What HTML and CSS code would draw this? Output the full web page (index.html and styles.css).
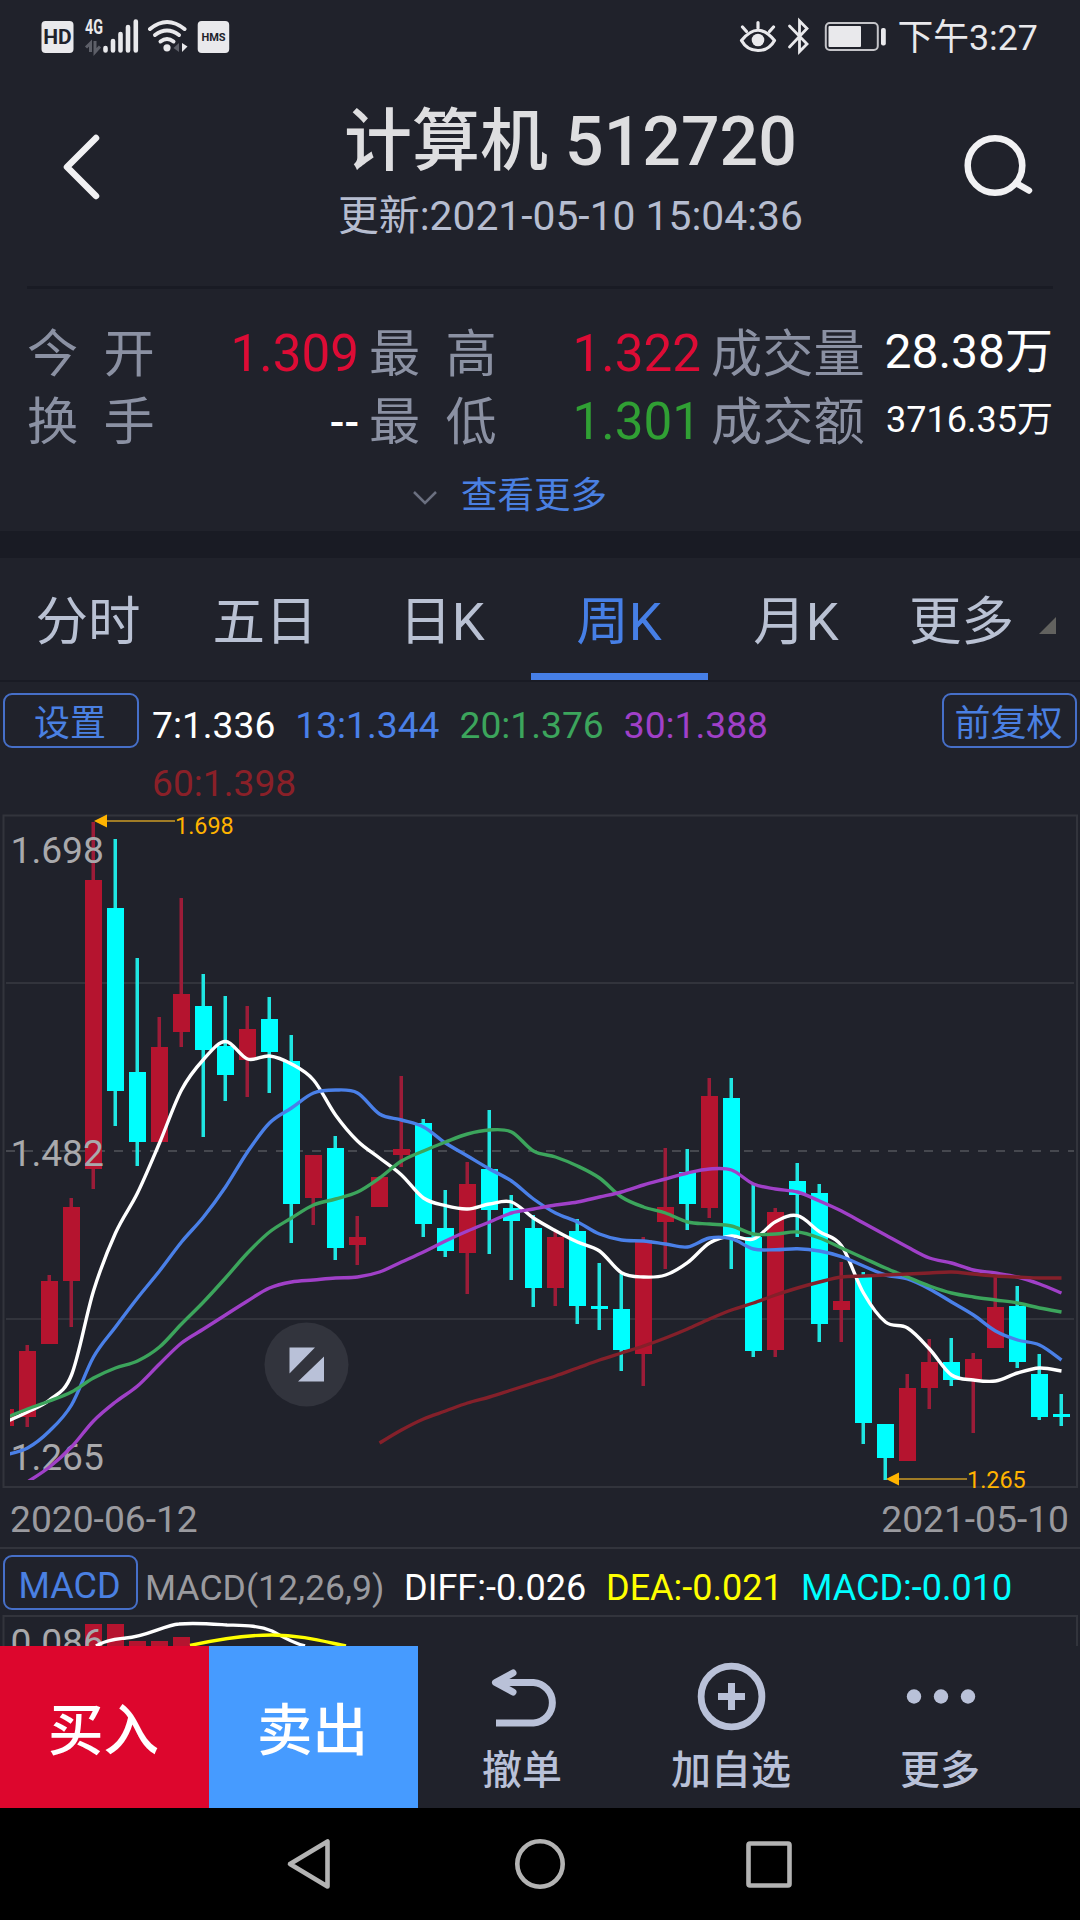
FILE: index.html
```html
<!DOCTYPE html>
<html lang="zh-CN">
<head>
    <meta charset="UTF-8">
    <meta name="viewport" content="width=device-width, initial-scale=1.0">
    <title>计算机 512720</title>
    <link rel="stylesheet" href="styles.css">
</head>
<body>
    <!-- Status Bar -->
    <div class="status-bar">
        <svg class="status-left" width="200" height="40" viewBox="36 16 200 40">
            <rect x="41.5" y="21" width="32" height="32" rx="4" fill="#e9e9ec"/>
            <text x="57.5" y="44" class="hd-text">HD</text>
            <text x="94" y="34" class="net-text" textLength="18" lengthAdjust="spacingAndGlyphs">4G</text>
            <path d="M90.500 52V43L86 47.500M95 41V52L100 46.500" fill="none" stroke="#5d5f68" stroke-width="3"/>
            <path d="M105.500 48V50.500M113 41V50.500M120.500 34V50.500M128 27V50.500M135.800 21.500V50.500" stroke="#e9e9ec" stroke-width="4.600" stroke-linecap="round"/>
            <g fill="none" stroke="#e9e9ec" stroke-width="4" stroke-linecap="round">
                <path d="M150 29Q167 15 184.500 29"/>
                <path d="M155 35Q167 26 179 35"/>
                <path d="M160.500 41.500Q167 36.500 173.500 41.500"/>
            </g>
            <circle cx="167" cy="47.800" r="3.600" fill="#e9e9ec"/>
            <path d="M179 43V52L173.500 48Z" fill="#5d5f68"/>
            <path d="M182 43V52L187.500 46.500Z" fill="#e9e9ec"/>
            <rect x="197.700" y="21" width="31.500" height="32" rx="4" fill="#e9e9ec"/>
            <text x="213.500" y="40.500" class="hms-text">HMS</text>
        </svg>
        <div class="status-right">
            <svg width="150" height="40" viewBox="740 16 150 40">
                <g fill="none" stroke="#e9e9ec" stroke-width="3.200" stroke-linecap="round">
                    <path d="M742.500 40.500Q759 20 775.500 40.500Q770 50.500 759 50.500Q748 50.500 742.500 40.500Z" stroke-linejoin="round"/>
                    <path d="M759 28V22.500M747.500 31.500L743.500 27M770.500 31.500L774.500 27"/>
                </g>
                <circle cx="759" cy="40" r="6.300" fill="#e9e9ec"/>
                <path d="M790.500 26L808 44L800.500 51.500V21L808 28.500L790.500 47" fill="none" stroke="#e9e9ec" stroke-width="2.800" stroke-linecap="round"/>
                <rect x="826.800" y="23" width="52" height="27" rx="4" fill="none" stroke="#c4c4c8" stroke-width="2"/>
                <rect x="829.500" y="26" width="32.500" height="21" rx="1" fill="#e9e9ec"/>
                <rect x="882" y="28" width="4.800" height="17.500" rx="2" fill="#e9e9ec"/>
            </svg>
            <span class="clock">下午3:27</span>
        </div>
    </div>

    <!-- Title -->
    <div class="header">
        <svg class="icon-back" width="60" height="80" viewBox="0 0 60 80"><path d="M38 11L9 40L38 69" fill="none" stroke="#f1f1f3" stroke-width="6.500" stroke-linecap="round" stroke-linejoin="round"/></svg>
        <div class="title">
            <h1>计算机 512720</h1>
            <p>更新:2021-05-10 15:04:36</p>
        </div>
        <svg class="icon-search" width="80" height="80" viewBox="0 0 80 80" fill="none" stroke="#f1f1f3">
            <circle cx="35" cy="38.500" r="27.300" stroke-width="6.500"/>
            <path d="M56 56L69 63.500" stroke-width="6.500" stroke-linecap="round"/>
        </svg>
    </div>

    <!-- Quote figures -->
    <div class="quotes">
        <div class="quote-col col-open">
            <div class="quote"><span class="label">今  开</span><span class="value up">1.309</span></div>
            <div class="quote"><span class="label">换  手</span><span class="value dashes">--</span></div>
        </div>
        <div class="quote-col col-range">
            <div class="quote"><span class="label">最  高</span><span class="value up">1.322</span></div>
            <div class="quote"><span class="label">最  低</span><span class="value down">1.301</span></div>
        </div>
        <div class="quote-col col-volume">
            <div class="quote"><span class="label">成交量</span><span class="value volume">28.38万</span></div>
            <div class="quote"><span class="label">成交额</span><span class="value amount">3716.35万</span></div>
        </div>
    </div>
    <div class="show-more">
        <svg width="26" height="16" viewBox="0 0 26 16"><path d="M2 2L13 13L24 2" fill="none" stroke="#6b7080" stroke-width="2.500"/></svg>
        <span>查看更多</span>
    </div>

    <!-- Period tabs -->
    <div class="tabs">
        <a class="tab">分时</a>
        <a class="tab">五日</a>
        <a class="tab">日K</a>
        <a class="tab active">周K</a>
        <a class="tab">月K</a>
        <a class="tab tab-more">更多</a>
    </div>

    <!-- Moving averages -->
    <div class="ma-bar">
        <button class="outline-btn settings-btn">设置</button>
        <div class="ma-list">
            <span class="ma7">7:1.336</span>
            <span class="ma13">13:1.344</span>
            <span class="ma20">20:1.376</span>
            <span class="ma30">30:1.388</span>
            <span class="ma60">60:1.398</span>
        </div>
        <button class="outline-btn adjust-btn">前复权</button>
    </div>

    <!-- Weekly K line chart -->
    <svg class="k-chart" width="1080" height="682" viewBox="0 808 1080 682">
        <defs>
            <clipPath id="plotArea"><rect x="10" y="810" width="1064" height="670"/></clipPath>
        </defs>
        <path class="grid" d="M3.500 815.500H1077V1487H3.500ZM6 983H1074M6 1319H1074"/>
        <path class="grid-dash" d="M6 1151H1074"/>
        <g id="candles" clip-path="url(#plotArea)"></g>
        <g class="axis-text">
            <text x="10.500" y="863">1.698</text>
            <text x="10.500" y="1166">1.482</text>
            <text x="10.500" y="1470">1.265</text>
        </g>
        <g id="averages" clip-path="url(#plotArea)"></g>
        <g class="marks">
            <path d="M106 821H175M898 1479H967"/>
            <polygon points="94,821 107,814.500 107,827.500"/>
            <polygon points="886,1479 899,1472.500 899,1485.500"/>
            <text x="175" y="834">1.698</text>
            <text x="967" y="1488">1.265</text>
        </g>
        <circle cx="306.500" cy="1364.500" r="42" fill="#32343d"/>
        <path d="M289.500 1347.500H315L289.500 1373.500ZM324 1356.500V1381.500H298Z" fill="#b9c1d8"/>
    </svg>
    <div class="dates">
        <span>2020-06-12</span>
        <span>2021-05-10</span>
    </div>

    <!-- MACD -->
    <div class="macd-bar">
        <button class="outline-btn macd-btn">MACD</button>
        <span class="macd-name">MACD(12,26,9)</span>
        <span class="diff">DIFF:-0.026</span>
        <span class="dea">DEA:-0.021</span>
        <span class="macd">MACD:-0.010</span>
    </div>
    <svg class="macd-chart" width="1080" height="31" viewBox="0 1615 1080 31">
        <path class="grid" d="M3.500 1650V1616H1077V1650"/>
        <path d="M85 1624H102V1650H85ZM107 1624H124V1650H107ZM129 1641H146V1650H129ZM151 1641H168V1650H151ZM173 1637H190V1650H173Z" fill="#b5142f"/>
        <g class="axis-text"><text x="10.500" y="1655">0.086</text></g>
        <path class="line" stroke="#fff" d="M96 1646C108 1639 118 1639 126 1638C145 1637 165 1625 179 1624C195 1622.500 212 1624 227 1625C242 1625.500 258 1625 272 1631C282 1636 290 1642 305 1646"/>
        <path class="line" stroke="#ff0" d="M190 1645.500C215 1640 245 1635 272 1635C300 1635 322 1641 346 1646"/>
    </svg>

    <!-- Trade actions -->
    <div class="actions">
        <a class="action buy">买入</a>
        <a class="action sell">卖出</a>
        <a class="action">
            <svg width="80" height="80" viewBox="0 0 80 80" fill="none" stroke="#b9c1d8" stroke-width="7">
                <path d="M30 27L12.500 36.500L30 46" stroke-linecap="round" stroke-linejoin="round"/>
                <path d="M14 36.500H50.500A20.300 20.300 0 0 1 50.500 77H13"/>
            </svg>
            <span>撤单</span>
        </a>
        <a class="action">
            <svg width="80" height="80" viewBox="0 0 80 80" fill="none" stroke="#b9c1d8">
                <circle cx="39.500" cy="50.500" r="30.400" stroke-width="6.800"/>
                <path d="M39.500 37V64M26 50.500H53" stroke-width="7"/>
            </svg>
            <span>加自选</span>
        </a>
        <a class="action">
            <svg width="80" height="80" viewBox="0 0 80 80" fill="#b9c1d8">
                <circle cx="13" cy="50.500" r="7.200"/>
                <circle cx="40" cy="50.500" r="7.200"/>
                <circle cx="67" cy="50.500" r="7.200"/>
            </svg>
            <span>更多</span>
        </a>
    </div>

    <!-- System navigation -->
    <div class="system-nav">
        <svg width="540" height="60" viewBox="270 1834 540 60" fill="none" stroke="#b3b3b3" stroke-width="4.600" stroke-linejoin="round">
            <path d="M290 1864L327.500 1841.500V1886.500Z"/>
            <circle cx="540" cy="1864" r="22.700"/>
            <rect x="748.500" y="1843.500" width="41" height="42" rx="1.500"/>
        </svg>
    </div>

    <script src="chart.js"></script>
</body>
</html>
```
FILE: styles.css
```css
/* General Reset */
* {
    margin: 0;
    padding: 0;
    box-sizing: border-box;
}

body {
    width: 1080px;
    height: 1920px;
    overflow: hidden;
    display: flex;
    flex-direction: column;
    background-color: #20222b;
    color: #fff;
    font-family: Roboto, "Noto Sans CJK SC", sans-serif;
}

svg {
    display: block;
    flex-shrink: 0;
}

/* Status Bar */
.status-bar {
    height: 74px;
    padding: 16px 42px 0 36px;
    display: flex;
    justify-content: space-between;
    align-items: flex-start;
}

.status-right {
    display: flex;
    gap: 8px;
}

.clock {
    font-size: 35.8px;
    line-height: 45px;
    color: #e9e9ec;
}

.hd-text {
    font-size: 21px;
    font-weight: 700;
    text-anchor: middle;
    fill: #20222b;
}

.net-text {
    font-size: 20px;
    font-weight: 700;
    text-anchor: middle;
    fill: #e9e9ec;
}

.hms-text {
    font-size: 11px;
    font-weight: 700;
    text-anchor: middle;
    fill: #20222b;
}

/* Header */
.header {
    height: 215px;
    margin: 0 27px;
    padding: 0 13px 0 31px;
    display: flex;
    border-bottom: 3px solid #191b24;
}

.icon-back,
.icon-search {
    margin-top: 53px;
}

.title {
    flex: 1;
    padding: 23px 0 0 63px;
    text-align: center;
}

.title h1 {
    font-size: 68px;
    line-height: 90px;
    font-weight: 500;
    color: #dedee0;
}

.title p {
    margin-top: 3px;
    font-size: 40.8px;
    line-height: 52px;
    color: #b6bdd0;
}

/* Quotes */
.quotes {
    height: 171px;
    padding: 31px 27px 0;
    display: flex;
}

.col-open {
    width: 332px;
    margin-right: 10px;
}

.col-range {
    width: 332px;
    margin-right: 10px;
}

.col-volume {
    width: 342px;
}

.quote {
    height: 68px;
    display: flex;
    justify-content: space-between;
    font-size: 51.2px;
    line-height: 69px;
    white-space: pre;
}

.label {
    color: #8b91a3;
}

.up {
    color: #dd0c35;
}

.down {
    color: #30a034;
}

.value.up,
.value.down {
    line-height: 68px;
}

.dashes {
    font-weight: 500;
    font-size: 43px;
}

.volume {
    font-size: 48px;
    line-height: 63px;
}

.amount {
    font-size: 36px;
    line-height: 64px;
}

.show-more {
    height: 71px;
    padding: 15px 0 0 412px;
    display: flex;
    gap: 23px;
    font-size: 36.5px;
    line-height: 41px;
    color: #4a80e2;
}

.show-more svg {
    margin-top: 15px;
}

/* Tabs */
.tabs {
    height: 151px;
    display: flex;
    border-top: 27px solid #191b24;
    border-bottom: 2px solid #191b24;
}

.tab {
    width: 177px;
    padding-right: 1px;
    border-bottom: 7px solid transparent;
    font-size: 52.5px;
    line-height: 129px;
    text-align: center;
    color: #b9c1d3;
}

.tab.active {
    color: #467fe6;
    border-bottom-color: #467fe6;
}

.tab-more {
    display: flex;
    gap: 25px;
    width: 195px;
    padding-left: 24px;
}

.tab-more::after {
    content: "";
    align-self: center;
    margin-top: 20px;
    border-left: 17px solid transparent;
    border-bottom: 17px solid #62625f;
}

/* Moving averages */
.ma-bar {
    height: 126px;
    padding: 11px 3px 0;
    display: flex;
    align-items: flex-start;
}

.outline-btn {
    flex-shrink: 0;
    height: 55px;
    padding: 4px 2px 0 0;
    border: 2px solid #466fc8;
    border-radius: 9px;
    background: none;
    color: #4a80e2;
    font-family: inherit;
    font-size: 36px;
    line-height: 50px;
}

.settings-btn {
    width: 136px;
}

.adjust-btn {
    width: 135px;
}

.ma-list {
    flex: 1;
    padding: 3px 118px 0 13px;
    display: flex;
    flex-wrap: wrap;
    column-gap: 20px;
    font-size: 37.2px;
    line-height: 58px;
}

.ma13 {
    color: #4a80e8;
}

.ma20 {
    color: #3ca55c;
}

.ma30 {
    color: #a040c8;
}

.ma60 {
    color: #8a2028;
}

/* Charts */
.k-chart {
    overflow: visible;
}

.grid {
    fill: none;
    stroke: #32343c;
    stroke-width: 2;
}

.grid-dash {
    stroke: #46484f;
    stroke-width: 2;
    stroke-dasharray: 9 9;
}

.line {
    fill: none;
    stroke-width: 3.4;
}

.axis-text {
    font-size: 37.2px;
    fill: #a9a9ac;
}

.marks {
    font-size: 23.4px;
    fill: #ffb300;
}

.marks path {
    stroke: #a07c26;
    stroke-width: 2;
}

.dates {
    height: 59px;
    padding: 0 11px 0 10px;
    display: flex;
    justify-content: space-between;
    font-size: 37.2px;
    line-height: 58px;
    color: #9a9a9f;
    border-bottom: 2px solid #32343c;
}

/* MACD */
.macd-bar {
    height: 66px;
    padding: 6px 3px 0;
    display: flex;
    font-size: 36px;
    line-height: 66px;
}

.macd-btn {
    width: 135px;
    margin-right: 6px;
}

.macd-name {
    color: #9a9a9f;
    width: 260px;
    padding-left: 1px;
    font-size: 35.6px;
}

.diff {
    width: 202px;
}

.dea {
    width: 195px;
    color: #ff0;
}

.macd {
    color: #0ff;
}

/* Actions */
.actions {
    height: 162px;
    display: flex;
}

.action {
    width: 209px;
    display: flex;
    flex-direction: column;
    align-items: center;
    font-size: 40px;
    line-height: 50px;
    font-weight: 500;
    color: #b9c1d8;
}

.action svg {
    overflow: visible;
}

.action span {
    margin-top: 20px;
    padding-right: 1px;
}

.buy,
.sell {
    justify-content: center;
    padding: 9px 2px 0 0;
    font-size: 55.5px;
    color: #fff;
}

.buy {
    background-color: #dd062d;
}

.sell {
    background-color: #469bff;
}

/* System navigation */
.system-nav {
    height: 112px;
    padding: 26px 270px 0;
    background-color: #000;
}
```
FILE: chart.js
```js
const STEP = 22;
const FIRST_X = 5.5;
const UP = '#b5142f';
const DOWN = '#00ffff';

// [high, body top, body bottom, low, rising]
const candles = [
    [1409, 1409, 1426, 1426, 1], [1345, 1351, 1417, 1427, 1], [1275, 1281, 1344, 1344, 1],
    [1198, 1207, 1281, 1327, 1], [822, 880, 1169, 1189, 1], [839, 908, 1091, 1126, 0],
    [958, 1072, 1142, 1166, 0], [1017, 1047, 1142, 1142, 1], [898, 994, 1032, 1047, 1],
    [974, 1006, 1050, 1137, 0], [996, 1046, 1075, 1101, 0], [1006, 1029, 1060, 1097, 1],
    [997, 1019, 1052, 1093, 0], [1035, 1061, 1204, 1243, 0], [1155, 1155, 1198, 1225, 1],
    [1136, 1148, 1248, 1260, 0], [1216, 1237, 1245, 1265, 1], [1177, 1177, 1207, 1207, 1],
    [1076, 1149, 1155, 1167, 1], [1119, 1123, 1224, 1237, 0], [1190, 1228, 1251, 1257, 0],
    [1162, 1184, 1253, 1294, 1], [1110, 1169, 1210, 1254, 0], [1195, 1208, 1221, 1280, 0],
    [1215, 1228, 1288, 1307, 0], [1230, 1237, 1288, 1306, 1], [1219, 1231, 1306, 1324, 0],
    [1263, 1306, 1309, 1330, 0], [1274, 1309, 1350, 1371, 0], [1237, 1240, 1354, 1386, 1],
    [1148, 1207, 1222, 1269, 1], [1149, 1172, 1204, 1230, 0], [1078, 1096, 1208, 1218, 1],
    [1078, 1098, 1237, 1269, 0], [1184, 1237, 1351, 1357, 0], [1208, 1212, 1350, 1357, 1],
    [1163, 1181, 1195, 1237, 0], [1184, 1193, 1324, 1342, 0], [1262, 1301, 1310, 1342, 1],
    [1272, 1277, 1423, 1444, 0], [1424, 1424, 1458, 1480, 0], [1374, 1388, 1461, 1461, 1],
    [1339, 1362, 1388, 1409, 1], [1338, 1362, 1380, 1386, 0], [1353, 1359, 1379, 1433, 1],
    [1276, 1307, 1348, 1348, 1], [1286, 1306, 1362, 1368, 0], [1354, 1374, 1417, 1420, 0],
    [1394, 1414, 1417, 1426, 0]
];

const averages = [
    { color: '#ffffff', start: 0, ys: [1422, 1412, 1400, 1375, 1291, 1233, 1193, 1143, 1090, 1059.5, 1041.5, 1059, 1056, 1064, 1080, 1115, 1141, 1158, 1175, 1198, 1205.7, 1209, 1204, 1202, 1218, 1230.7, 1242, 1251, 1272.7, 1277, 1275, 1262.7, 1243, 1236, 1239, 1221.7, 1215.7, 1231.7, 1245.7, 1293, 1322, 1328, 1349, 1375, 1380, 1381, 1373, 1368, 1371] },
    { color: '#4a80e8', start: 0, ys: [1455, 1448, 1431, 1405, 1357, 1327, 1298, 1271, 1242, 1217, 1187, 1152, 1123, 1108, 1093, 1090, 1093, 1114, 1120, 1127, 1143, 1156, 1169, 1181, 1199, 1213, 1222, 1234, 1240, 1241, 1244, 1247, 1238, 1238.7, 1249, 1249.7, 1248.7, 1251, 1256.7, 1266, 1275, 1279, 1289, 1302, 1315, 1331, 1340, 1345, 1360] },
    { color: '#3ca55c', start: 0, ys: [1418, 1409, 1401, 1392, 1378, 1368, 1361, 1347, 1324, 1302, 1278, 1253, 1232, 1218, 1205, 1199, 1192, 1178, 1161, 1151, 1142, 1134, 1130, 1132, 1151, 1157, 1166, 1178, 1197, 1207, 1213, 1222, 1224, 1226, 1234, 1234, 1232, 1238, 1248, 1258, 1268, 1277, 1286, 1293, 1297, 1300, 1303, 1308, 1312] },
    { color: '#a040c8', start: 1, ys: [1482, 1467, 1447, 1421, 1402, 1386, 1364, 1343, 1329, 1315, 1301, 1288, 1282, 1280, 1278, 1277, 1272, 1262, 1252, 1241, 1231, 1222, 1213, 1209, 1205, 1202, 1197, 1192, 1185, 1179, 1173, 1169, 1170, 1184, 1189, 1192, 1201, 1211, 1223, 1235, 1247, 1258, 1263, 1270, 1273, 1277, 1284, 1293] },
    { color: '#84202a', start: 17, ys: [1443, 1430, 1419, 1411, 1403, 1397, 1390, 1383, 1376, 1368, 1360, 1353, 1346, 1338, 1329, 1319, 1310, 1303, 1295, 1288, 1282, 1277, 1276, 1275, 1274, 1273, 1272, 1274, 1276, 1277, 1278, 1278] }
];

function add(parent, name, attrs) {
    const el = document.createElementNS('http://www.w3.org/2000/svg', name);
    for (const key in attrs) {
        el.setAttribute(key, attrs[key]);
    }
    parent.appendChild(el);
}

// smooth curve that passes through every point
function curve(points) {
    let d = 'M' + points[0];
    for (let i = 0; i < points.length - 1; i++) {
        const p0 = points[i - 1] || points[i];
        const p1 = points[i];
        const p2 = points[i + 1];
        const p3 = points[i + 2] || p2;
        d += ' C' + [
            p1[0] + (p2[0] - p0[0]) / 6, p1[1] + (p2[1] - p0[1]) / 6,
            p2[0] - (p3[0] - p1[0]) / 6, p2[1] - (p3[1] - p1[1]) / 6,
            p2[0], p2[1]
        ].join(' ');
    }
    return d;
}

const candleLayer = document.getElementById('candles');
candles.forEach(function (c, i) {
    const x = FIRST_X + i * STEP;
    add(candleLayer, 'rect', {
        x: x - 2, y: c[0], width: 3.5, height: c[3] - c[0],
        fill: c[4] ? '#9c1c38' : '#1fe6e2'
    });
    add(candleLayer, 'rect', {
        x: x - 8.5, y: c[1], width: 17, height: c[2] - c[1],
        fill: c[4] ? UP : DOWN
    });
});

const averageLayer = document.getElementById('averages');
averages.forEach(function (line) {
    const points = line.ys.map(function (y, i) {
        return [FIRST_X + (line.start + i) * STEP, y];
    });
    add(averageLayer, 'path', { class: 'line', stroke: line.color, d: curve(points) });
});
```
